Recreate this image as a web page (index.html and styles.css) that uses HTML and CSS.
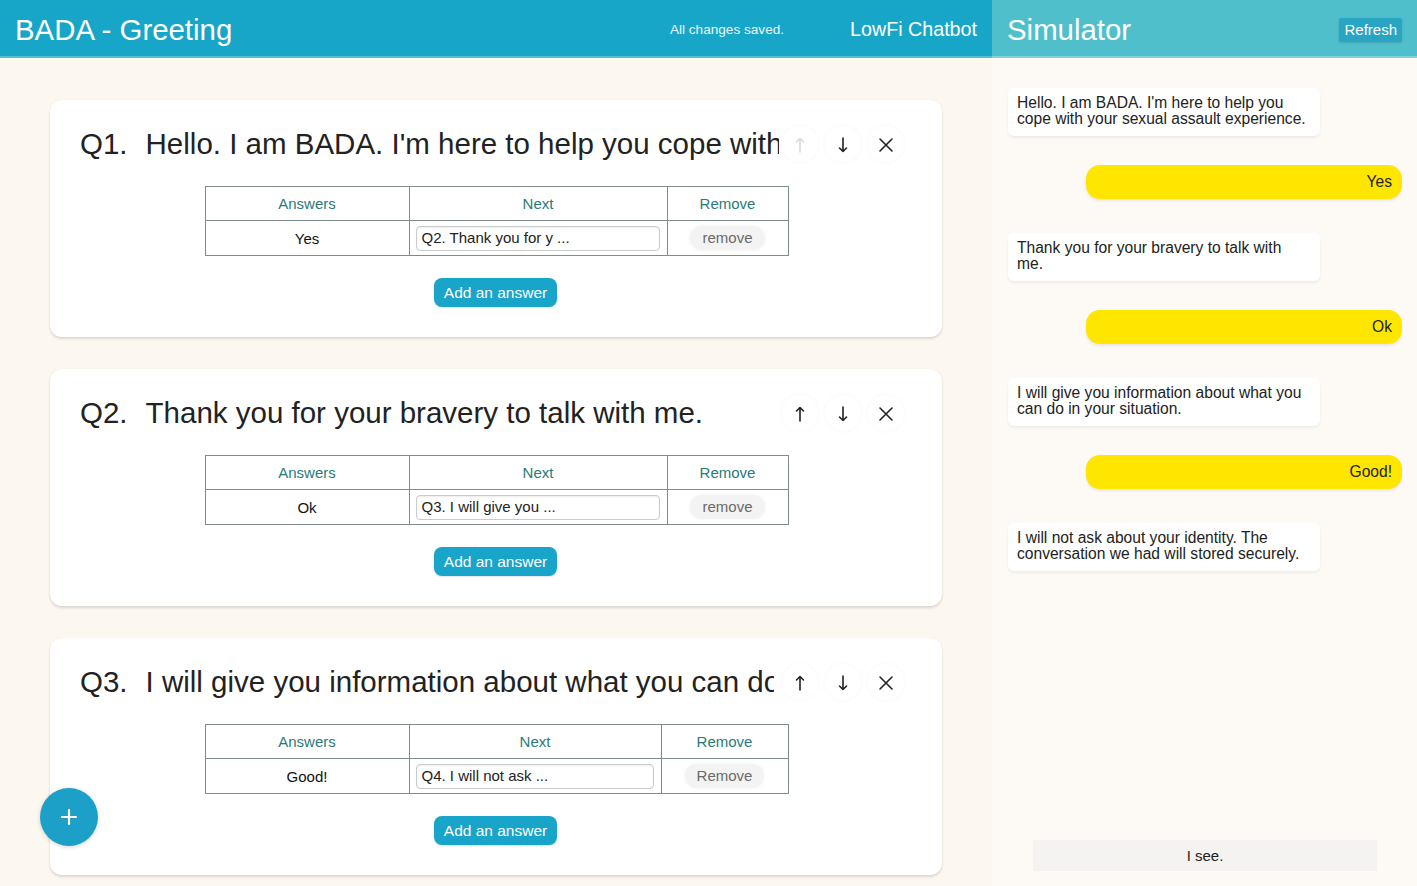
FILE: index.html
```html
<!DOCTYPE html>
<html lang="en">
<head>
<meta charset="utf-8">
<title>BADA - Greeting</title>
<link rel="stylesheet" href="styles.css">
</head>
<body>
<div class="app">
  <section class="editor">
    <header class="topbar">
      <h1 class="app-title">BADA - Greeting</h1>
      <span class="saved">All changes saved.</span>
      <span class="brand">LowFi Chatbot</span>
    </header>
    <main class="cards">
      <article class="card">
        <div class="card-head">
          <h2 class="q-title"><span class="q-num">Q1.</span>Hello. I am BADA. I'm here to help you cope with your sexual assault experience.</h2>
          <div class="q-tools">
            <button class="tool disabled"><svg viewBox="0 0 16 18" width="16" height="18"><path d="M8 16V2.5M4.5 6L8 2.5L11.5 6"/></svg></button>
            <button class="tool"><svg viewBox="0 0 16 18" width="16" height="18"><path d="M8 2V15.5M4.5 12L8 15.5L11.5 12"/></svg></button>
            <button class="tool"><svg viewBox="0 0 16 16" width="16" height="16"><path d="M2 2L14 14M14 2L2 14"/></svg></button>
          </div>
        </div>
        <table class="answers">
          <thead><tr><th class="c-ans">Answers</th><th class="c-next">Next</th><th class="c-rem">Remove</th></tr></thead>
          <tbody><tr><td>Yes</td><td><div class="next-input">Q2. Thank you for y ...</div></td><td><span class="remove">remove</span></td></tr></tbody>
        </table>
        <button class="add-btn">Add an answer</button>
      </article>

      <article class="card">
        <div class="card-head">
          <h2 class="q-title"><span class="q-num">Q2.</span>Thank you for your bravery to talk with me.</h2>
          <div class="q-tools">
            <button class="tool"><svg viewBox="0 0 16 18" width="16" height="18"><path d="M8 16V2.5M4.5 6L8 2.5L11.5 6"/></svg></button>
            <button class="tool"><svg viewBox="0 0 16 18" width="16" height="18"><path d="M8 2V15.5M4.5 12L8 15.5L11.5 12"/></svg></button>
            <button class="tool"><svg viewBox="0 0 16 16" width="16" height="16"><path d="M2 2L14 14M14 2L2 14"/></svg></button>
          </div>
        </div>
        <table class="answers">
          <thead><tr><th class="c-ans">Answers</th><th class="c-next">Next</th><th class="c-rem">Remove</th></tr></thead>
          <tbody><tr><td>Ok</td><td><div class="next-input">Q3. I will give you ...</div></td><td><span class="remove">remove</span></td></tr></tbody>
        </table>
        <button class="add-btn">Add an answer</button>
      </article>

      <article class="card">
        <div class="card-head">
          <h2 class="q-title narrow"><span class="q-num">Q3.</span>I will give you information about what you can do in your situation.</h2>
          <div class="q-tools">
            <button class="tool"><svg viewBox="0 0 16 18" width="16" height="18"><path d="M8 16V2.5M4.5 6L8 2.5L11.5 6"/></svg></button>
            <button class="tool"><svg viewBox="0 0 16 18" width="16" height="18"><path d="M8 2V15.5M4.5 12L8 15.5L11.5 12"/></svg></button>
            <button class="tool"><svg viewBox="0 0 16 16" width="16" height="16"><path d="M2 2L14 14M14 2L2 14"/></svg></button>
          </div>
        </div>
        <table class="answers alt">
          <thead><tr><th class="c-ans">Answers</th><th class="c-next">Next</th><th class="c-rem">Remove</th></tr></thead>
          <tbody><tr><td>Good!</td><td><div class="next-input">Q4. I will not ask ...</div></td><td><span class="remove">Remove</span></td></tr></tbody>
        </table>
        <button class="add-btn">Add an answer</button>
      </article>
    </main>
    <button class="fab"><svg viewBox="0 0 20 20" width="20" height="20"><path d="M10 3V17M3 10H17"/></svg></button>
  </section>

  <aside class="sim">
    <header class="sim-bar">
      <h2 class="sim-title">Simulator</h2>
      <button class="refresh">Refresh</button>
    </header>
    <div class="sim-body">
      <div class="chat">
        <div class="bubble bot">Hello. I am BADA. I'm here to help you cope with your sexual assault experience.</div>
        <div class="bubble user">Yes</div>
        <div class="bubble bot">Thank you for your bravery to talk with me.</div>
        <div class="bubble user">Ok</div>
        <div class="bubble bot">I will give you information about what you can do in your situation.</div>
        <div class="bubble user">Good!</div>
        <div class="bubble bot">I will not ask about your identity. The conversation we had will stored securely.</div>
      </div>
      <div class="reply">I see.</div>
    </div>
  </aside>
</div>
</body>
</html>
```

FILE: styles.css
```css
* { box-sizing: border-box; }
html, body { margin: 0; padding: 0; }
body {
  width: 1417px;
  height: 886px;
  overflow: hidden;
  font-family: "Liberation Sans", Arial, Helvetica, sans-serif;
  color: #222;
  background: #fcf7ef;
}
button { font-family: inherit; border: none; cursor: pointer; }
h1, h2 { margin: 0; font-weight: normal; }

.app {
  display: grid;
  grid-template-columns: 992px 1fr;
  height: 886px;
}

/* ---------- editor ---------- */
.editor {
  position: relative;
  display: flex;
  flex-direction: column;
  background: #fcf7ef;
}
.topbar {
  height: 58px;
  flex: none;
  display: flex;
  align-items: center;
  padding: 0 15px 0 15px;
  background: #17a6c8;
  border-bottom: 2px solid #4fc0d6;
  color: #fff;
}
.app-title {
  font-size: 29.4px;
  flex: 1;
  padding-top: 4px;
}
.saved {
  font-size: 13.6px;
  color: #e6f6fa;
  margin-right: 66px;
  padding-top: 3px;
}
.brand {
  font-size: 19.7px;
  padding-top: 2px;
}

.cards {
  display: flex;
  flex-direction: column;
  gap: 32px;
  padding: 42px 50px 0 50px;
}
.card {
  height: 237px;
  background: #fff;
  border-radius: 12px;
  box-shadow: 0 2px 3px rgba(0,0,0,0.13), 0 0 2px rgba(0,0,0,0.04);
  padding: 26px 38px 0 30px;
  display: flex;
  flex-direction: column;
  align-items: center;
}
.card-head {
  width: 100%;
  height: 36px;
  display: flex;
  align-items: center;
}
.q-title {
  flex: none;
  width: 699px;
  font-size: 29.5px;
  line-height: 36px;
  white-space: nowrap;
  overflow: hidden;
  color: #222;
}
.q-title.narrow { width: 694px; }
.q-num {
  display: inline-block;
  margin-right: 18px;
}
.q-tools {
  margin-left: auto;
  display: flex;
  gap: 7px;
}
.tool {
  width: 36px;
  height: 36px;
  border-radius: 50%;
  background: #fff;
  box-shadow: 0 0 5px rgba(0,0,0,0.035);
  display: flex;
  align-items: center;
  justify-content: center;
  padding: 0;
  padding-top: 2px;
}
.tool svg path {
  fill: none;
  stroke: #222;
  stroke-width: 1.6;
  stroke-linecap: round;
  stroke-linejoin: round;
}
.tool.disabled svg path { stroke: #d9d9d9; }

.answers {
  margin-top: 24px;
  border-collapse: collapse;
  font-size: 15px;
  margin-left: 9px;
}
.answers th, .answers td {
  border: 1px solid #7e8c8c;
  text-align: center;
  padding: 0;
}
.answers th {
  height: 34px;
  font-weight: normal;
  color: #2a7b79;
}
.answers td {
  height: 35px;
  color: #111;
}
.c-ans { width: 204px; }
.c-next { width: 258px; }
.c-rem { width: 121px; }
.answers.alt .c-next { width: 252px; }
.answers.alt .c-rem { width: 127px; }

.next-input {
  margin: 0 7px 0 6px;
  height: 25px;
  border: 1px solid #c9cccc;
  border-radius: 4px;
  box-shadow: inset 0 1px 2px rgba(0,0,0,0.08);
  text-align: left;
  padding: 0 5px;
  line-height: 22px;
  font-size: 15px;
  color: #222;
  white-space: nowrap;
  overflow: hidden;
}
.remove {
  display: inline-block;
  padding: 0 12px;
  height: 24px;
  line-height: 23px;
  border-radius: 12px;
  background: #f3f3f3;
  box-shadow: 0 0 4px rgba(0,0,0,0.05);
  color: #6a6a6a;
  font-size: 15px;
}

.add-btn {
  margin-top: 22px;
  margin-left: 7px;
  width: 123px;
  height: 29px;
  border-radius: 8px;
  background: #19a4c9;
  color: #fff;
  font-size: 15.5px;
  padding: 0;
  box-shadow: 0 1px 2px rgba(0,0,0,0.12);
}

.fab {
  position: absolute;
  left: 40px;
  top: 788px;
  width: 58px;
  height: 58px;
  border-radius: 50%;
  background: #1ca0c7;
  box-shadow: 0 1px 4px rgba(0,0,0,0.18);
  display: flex;
  align-items: center;
  justify-content: center;
  padding: 0;
}
.fab svg path {
  fill: none;
  stroke: #fff;
  stroke-width: 2.2;
  stroke-linecap: round;
}

/* ---------- simulator ---------- */
.sim {
  display: flex;
  flex-direction: column;
  background: #fdf9f5;
  box-shadow: -1px 0 3px rgba(0,0,0,0.04);
}
.sim-bar {
  height: 58px;
  flex: none;
  display: flex;
  align-items: center;
  justify-content: space-between;
  padding: 0 15px;
  background: #50bfcc;
  border-bottom: 2px solid #7fd2dc;
  color: #fff;
}
.sim-title {
  font-size: 29.4px;
  padding-top: 3px;
}
.refresh {
  height: 24px;
  padding: 0 5px;
  background: #29a5c4;
  color: #fff;
  font-size: 15px;
  border-radius: 2px;
  box-shadow: 0 1px 3px rgba(0,0,0,0.15);
  margin-top: 3px;
}
.sim-body {
  flex: 1;
  display: flex;
  flex-direction: column;
  padding: 30px 15px 15px 16px;
}
.chat {
  display: flex;
  flex-direction: column;
}
.bubble {
  font-size: 15.6px;
  line-height: 16px;
}
.bubble.bot {
  width: 312px;
  background: #fff;
  padding: 7px 9px 9px;
  border-radius: 6px;
  box-shadow: 0 2px 3px rgba(0,0,0,0.06);
  color: #222;
  margin-bottom: 29px;
}
.bubble.user {
  margin-left: 78px;
  height: 34px;
  line-height: 34px;
  background: #ffe600;
  border-radius: 14px;
  text-align: right;
  padding: 0 10px;
  box-shadow: 0 2px 3px rgba(0,0,0,0.08);
  color: #222;
  margin-bottom: 34px;
}
.reply {
  margin: auto 25px 0 25px;
  height: 31px;
  line-height: 31px;
  background: #f4f3f2;
  text-align: center;
  font-size: 15px;
  color: #222;
}
```
